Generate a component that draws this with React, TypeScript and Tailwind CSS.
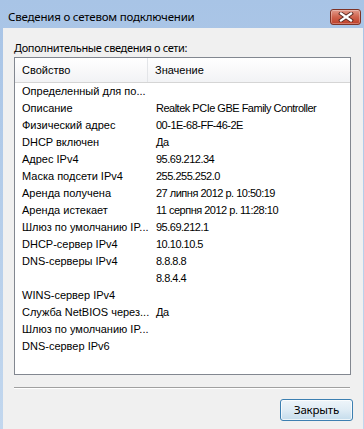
import React from 'react';

const rows: [string, string][] = [
  ['Определенный для по...', ''],
  ['Описание', 'Realtek PCIe GBE Family Controller'],
  ['Физический адрес', '00-1E-68-FF-46-2E'],
  ['DHCP включен', 'Да'],
  ['Адрес IPv4', '95.69.212.34'],
  ['Маска подсети IPv4', '255.255.252.0'],
  ['Аренда получена', '27 липня 2012 р. 10:50:19'],
  ['Аренда истекает', '11 серпня 2012 р. 11:28:10'],
  ['Шлюз по умолчанию IP...', '95.69.212.1'],
  ['DHCP-сервер IPv4', '10.10.10.5'],
  ['DNS-серверы IPv4', '8.8.8.8'],
  ['', '8.8.4.4'],
  ['WINS-сервер IPv4', ''],
  ['Служба NetBIOS через...', 'Да'],
  ['Шлюз по умолчанию IP...', ''],
  ['DNS-сервер IPv6', ''],
];

const CloseGlyph = () => (
  <svg width="16" height="10" viewBox="0 0 16 10">
    <path d="M3 1.5 L13 8.5 M13 1.5 L3 8.5" stroke="#5a2a22" strokeWidth="4" strokeLinecap="square" />
    <path d="M3 1.5 L13 8.5 M13 1.5 L3 8.5" stroke="#ffffff" strokeWidth="2.2" strokeLinecap="square" />
  </svg>
);

export default function App() {
  return (
    <div className="w-[364px] h-[429px] overflow-hidden flex flex-col pl-[3px] pr-[1px] bg-gradient-to-b from-[#a8c4e6] to-[#c2d7ee] font-['Noto_Sans',sans-serif]">
      {/* title bar */}
      <div className="h-[28px] shrink-0 flex items-center justify-between pt-[6px] pr-[2px]">
        <span className="pl-[5px] text-[11.5px] leading-[16px] text-black tracking-[-0.2px]">
          Сведения о сетевом подключении
        </span>
        <div className="w-[31px] h-[16px] rounded-[3px] border border-[#7e3326] bg-gradient-to-b from-[#e19a8b] via-[#cf624c] to-[#bd3d27] flex items-center justify-center shadow-[inset_0_0_0_1px_rgba(255,255,255,0.3)]">
          <CloseGlyph />
        </div>
      </div>

      {/* client area */}
      <div className="flex-1 bg-[#f0f0f0] flex flex-col pl-[11px] pt-[12px]">
        <div className="text-[11px] leading-[16px] text-black tracking-[-0.35px]">
          Дополнительные сведения о сети:
        </div>

        <div className="mt-[1px] w-[337px] h-[318px] border border-[#828790] bg-white flex flex-col font-['Liberation_Sans',Arial,sans-serif] text-[11px] text-black">
          <div className="h-[25px] shrink-0 flex border-b border-[#d5d5d5] bg-gradient-to-b from-white to-[#f2f3f5]">
            <div className="w-[133px] flex items-center pl-[7px] border-r border-[#e3e5e8]">Свойство</div>
            <div className="flex-1 flex items-center pl-[7px]">Значение</div>
          </div>
          {rows.map(([name, value], i) => (
            <div key={i} className="h-[17px] shrink-0 flex items-center">
              <div className="w-[134px] pl-[7px] whitespace-nowrap overflow-hidden">{name}</div>
              <div className="flex-1 pl-[7px] whitespace-nowrap tracking-[-0.5px]">{value}</div>
            </div>
          ))}
        </div>

        <div className="mt-[12px] w-[336px] h-[2px] border-t border-[#a0a0a0] border-b border-b-white" />

        <div className="mt-[10px] flex justify-end pr-[10px]">
          <button className="w-[73px] h-[22px] rounded-[3px] border border-[#3c7fb1] bg-gradient-to-b from-[#eef5fa] via-[#dfecf5] to-[#c4dcec] shadow-[inset_0_0_0_1px_rgba(255,255,255,0.7)] text-[11.5px] leading-[16px] text-black tracking-[-0.2px]">
            Закрыть
          </button>
        </div>
      </div>
    </div>
  );
}
